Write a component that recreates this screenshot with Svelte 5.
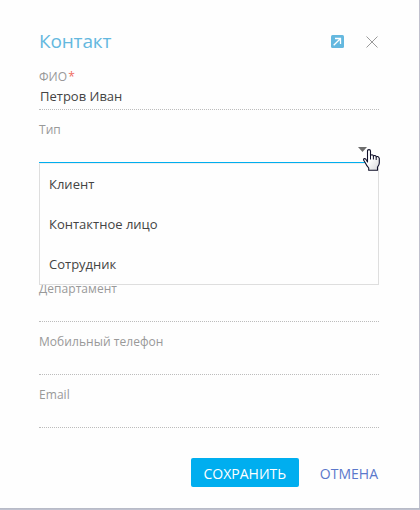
<script>
  const fields = [
    { label: 'ФИО', required: true, value: 'Петров Иван' },
    { label: 'Тип', options: ['Клиент', 'Контактное лицо', 'Сотрудник'] },
    { label: '' },
    { label: '' },
    { label: 'Департамент' },
    { label: 'Мобильный телефон' },
    { label: 'Email' }
  ];
</script>

<div class="backdrop">
  <section class="card">
    <header>
      <h1>Контакт</h1>
      <svg class="open" width="13" height="13" viewBox="0 0 13 13">
        <rect width="13" height="13" rx="1.5" fill="#64b8df" />
        <path d="M4 3.5H9.5V9M9.3 3.7L2.7 10.3" fill="none" stroke="#fff" stroke-width="1.3" />
      </svg>
      <svg width="12" height="12" viewBox="0 0 12 12">
        <path d="M.5.5L11.5 11.5M11.5.5L.5 11.5" fill="none" stroke="#8f8f8f" stroke-width=".9" />
      </svg>
    </header>

    {#each fields as f}
      <div class="field" class:active={f.options}>
        <div class="label">{f.label}{#if f.required}<span class="req">*</span>{/if}</div>
        <div class="value">{f.value ?? ''}</div>
        {#if f.options}
          <svg class="arrow" width="9" height="5" viewBox="0 0 9 5"><path d="M0 0H9L4.5 5Z" fill="#6e6e6e" /></svg>
          <ul>
            {#each f.options as o}<li>{o}</li>{/each}
          </ul>
          <svg class="hand" width="17" height="22" viewBox="0 0 17 22">
            <defs>
              <linearGradient id="skin" x1="0" y1="0" x2="1" y2="1">
                <stop offset=".45" stop-color="#fff" /><stop offset="1" stop-color="#d4d4d8" />
              </linearGradient>
            </defs>
            <path d="M4.5 13V2Q4.5.6 6 .6T7.5 2V7Q7.8 5.7 9 5.8T10.4 7.2Q10.8 6.3 11.9 6.5T13.2 8Q13.6 7.3 14.7 7.5T16.3 9.3V14Q16.3 16 14.5 18V21.3H5.7V19Q3.5 16.5 2.4 14L.7 11.3Q.3 9.7 1.5 9.6T3.4 11Z" fill="url(#skin)" stroke="#10102a" stroke-width="1.1" stroke-linejoin="round" />
            <path d="M7.5 6V10.5M10.4 7V10.5M13.2 8V11" fill="none" stroke="#10102a" stroke-width="1" />
          </svg>
        {/if}
      </div>
    {/each}

    <footer>
      <button class="save">СОХРАНИТЬ</button>
      <button class="cancel">ОТМЕНА</button>
    </footer>
  </section>
</div>

<style>
  :global(body) { background: #bfc1cf; overflow: hidden; }
  .backdrop {
    width: 420px; height: 510px; box-sizing: border-box; padding: 0 1px 2px 0;
    background: linear-gradient(#b4b7c3, #c3c5d3) bottom / 100% 2px no-repeat, #bfbfcd;
    font-family: "Open Sans", "Noto Sans", sans-serif;
  }
  .card { height: 508px; box-sizing: border-box; background: #fefefe; padding: 27px 40px 0 39px; }
  header { height: 29px; display: flex; align-items: center; margin-bottom: 1px; }
  h1 { margin: 0; flex: 1; font-size: 19px; letter-spacing: -.15px; line-height: 27px; font-weight: 400; color: #64b8df; }
  .open { margin-right: 22px; }
  header svg:last-child { margin-right: 1px; }
  .field {
    position: relative; height: 53px; box-sizing: border-box; padding-top: 11px;
    border-bottom: 1px dotted #bcbcbc;
  }
  .active { border-bottom: 1px solid #00aeef; }
  .label { height: 17px; line-height: 17px; font-size: 12px; letter-spacing: .05px; color: #999; white-space: nowrap; }
  .req { color: #ef6a5e; margin-left: 1px; }
  .value { padding: 1px 0 0 1px; font-size: 13px; line-height: 20px; color: #444; }
  .arrow { position: absolute; right: 12px; top: 37px; }
  ul {
    position: absolute; z-index: 1; left: 0; top: 53px; width: 100%; height: 122px; box-sizing: border-box;
    margin: 0; padding: 0; list-style: none; background: #fefefe;
    border: 1px solid #dedede; border-top-color: #eee;
  }
  li { height: 40px; line-height: 40px; padding-left: 9px; font-size: 13px; color: #444; }
  .hand { position: absolute; z-index: 2; right: -1px; top: 39px; }
  footer { display: flex; justify-content: flex-end; align-items: center; margin: 30px 1px 0 0; height: 29px; }
  button { height: 29px; box-sizing: border-box; border: 0; padding: 2px 0 0; background: none; font-family: inherit; font-size: 14px; line-height: 27px; white-space: nowrap; }
  .save { width: 108px; border-radius: 2px; background: #00aeef; color: #fff; margin-right: 21px; }
  .cancel { color: #5b78cb; }
</style>
